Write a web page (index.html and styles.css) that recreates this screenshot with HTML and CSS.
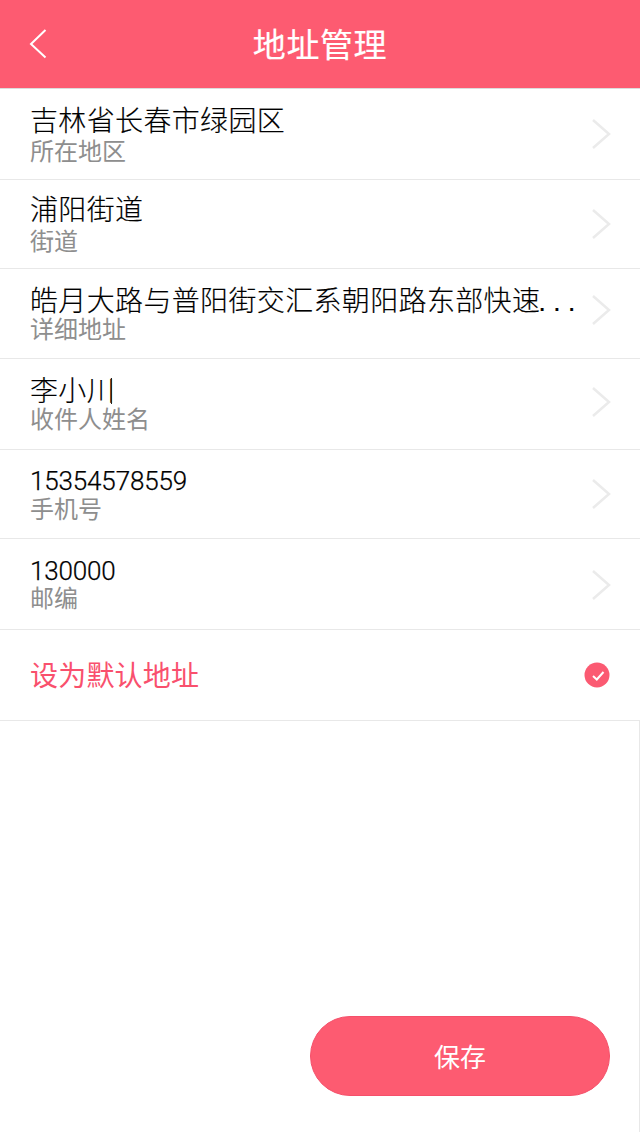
FILE: index.html
```html
<!DOCTYPE html>
<html>
<head>
  <title>地址管理</title>
  <link rel="stylesheet" href="styles.css">
</head>
<body>
  <div class="page">
    <div class="header">
      <svg class="back" width="18" height="30" viewBox="0 0 18 30"><path d="M16.5 1 L2 15 L16.5 28.500" fill="none" stroke="#fff" stroke-width="2"/></svg>
      <div class="title">地址管理</div>
    </div>

    <div class="row row1">
      <div class="info">
        <div class="value">吉林省长春市绿园区</div>
        <div class="label">所在地区</div>
      </div>
      <svg class="arrow" width="20" height="30" viewBox="0 0 20 30"><path d="M1 1 L17 15 L1 29" fill="none" stroke="#ebebeb" stroke-width="2.500"/></svg>
    </div>
    <div class="row row2">
      <div class="info">
        <div class="value">浦阳街道</div>
        <div class="label">街道</div>
      </div>
      <svg class="arrow" width="20" height="30" viewBox="0 0 20 30"><path d="M1 1 L17 15 L1 29" fill="none" stroke="#ebebeb" stroke-width="2.500"/></svg>
    </div>
    <div class="row row3">
      <div class="info">
        <div class="value">皓月大路与普阳街交汇系朝阳路东部快速<span class="dots">...</span></div>
        <div class="label">详细地址</div>
      </div>
      <svg class="arrow" width="20" height="30" viewBox="0 0 20 30"><path d="M1 1 L17 15 L1 29" fill="none" stroke="#ebebeb" stroke-width="2.500"/></svg>
    </div>
    <div class="row row4">
      <div class="info">
        <div class="value">李小川<span class="caret"></span></div>
        <div class="label">收件人姓名</div>
      </div>
      <svg class="arrow" width="20" height="30" viewBox="0 0 20 30"><path d="M1 1 L17 15 L1 29" fill="none" stroke="#ebebeb" stroke-width="2.500"/></svg>
    </div>
    <div class="row row5">
      <div class="info">
        <div class="value num">15354578559</div>
        <div class="label">手机号</div>
      </div>
      <svg class="arrow" width="20" height="30" viewBox="0 0 20 30"><path d="M1 1 L17 15 L1 29" fill="none" stroke="#ebebeb" stroke-width="2.500"/></svg>
    </div>
    <div class="row row6">
      <div class="info">
        <div class="value num">130000</div>
        <div class="label">邮编</div>
      </div>
      <svg class="arrow" width="20" height="30" viewBox="0 0 20 30"><path d="M1 1 L17 15 L1 29" fill="none" stroke="#ebebeb" stroke-width="2.500"/></svg>
    </div>
    <div class="row row-default">
      <div class="default-text">设为默认地址</div>
      <svg class="check" width="26" height="26" viewBox="0 0 26 26"><circle cx="13" cy="13" r="12.500" fill="#fb5a72"/><path d="M9 14 L12.800 17.500 L19.500 10" fill="none" stroke="#fff" stroke-width="2"/></svg>
    </div>

    <div class="bottom">
      <div class="save">保存</div>
    </div>
  </div>
</body>
</html>
```

FILE: styles.css
```css
body {
  margin: 0;
  background-color: #fff;
  font-family: "Liberation Sans", "Noto Sans CJK SC", sans-serif;
}

.page {
  display: flex;
  flex-direction: column;
  width: 640px;
  height: 1132px;
  overflow: hidden;
}

.header {
  position: relative;
  flex: none;
  box-sizing: border-box;
  height: 89px;
  background-color: #fd5b71;
  border-bottom: 1px solid #dcdcdc;
  display: flex;
  justify-content: center;
  align-items: center;
}

.header .back {
  position: absolute;
  left: 29px;
  top: 29px;
}

.header .title {
  margin-bottom: 2px;
  color: #fff;
  font-size: 33px;
  letter-spacing: 0.6px;
  -webkit-text-stroke: 0.2px #fff;
}

.row {
  flex: none;
  box-sizing: border-box;
  display: flex;
  align-items: center;
  justify-content: space-between;
  padding: 0 30px;
  border-bottom: 1px solid #e8e8e8;
}

.row1 { height: 91px; }
.row2 { height: 89px; }
.row3 { height: 90px; }
.row4 { height: 91px; }
.row5 { height: 89px; }
.row6 { height: 91px; }
.row-default { height: 91px; }

/* each row sits a little differently in the source, so offsets are per row */
.info {
  align-self: flex-start;
  min-width: 0;
}

.row1 .info { padding-top: 17px; }
.row2 .info { padding-top: 15px; }
.row3 .info { padding-top: 17px; }
.row4 .info { padding-top: 17px; }
.row5 .info { padding-top: 15px; }
.row6 .info { padding-top: 16px; }

.row2 .label { margin-top: 1px; }
.row3 .label { margin-top: -2px; }
.row4 .label { margin-top: -2px; }
.row5 .label { margin-top: -1px; }
.row6 .label { margin-top: -2px; }

.row3 .arrow { margin-bottom: 8px; }
.row4 .arrow { margin-bottom: 4px; }
.row6 .arrow { margin-top: 2px; }

.value {
  color: #000;
  font-size: 28px;
  font-weight: 300;
  line-height: 32px;
  letter-spacing: 0.35px;
  white-space: nowrap;
  -webkit-text-stroke: 0.15px #000;
}

.value.num {
  font-family: Roboto, sans-serif;
  font-size: 26px;
  font-weight: 300;
  letter-spacing: -0.15px;
  -webkit-text-stroke: 0.25px #000;
}

.dots {
  margin-left: -2px;
  letter-spacing: 7px;
}

.caret {
  display: inline-block;
  width: 1px;
  height: 26px;
  margin-left: -4px;
  background-color: #222;
  vertical-align: -3px;
}

.label {
  color: #8e8e8e;
  font-size: 24px;
  line-height: 28px;
}

.arrow {
  flex: none;
  margin-right: -2px;
}

.default-text {
  margin-bottom: 2px;
  color: #f9506d;
  font-size: 28px;
  letter-spacing: 0.2px;
}

.bottom {
  flex: 1;
  display: flex;
  justify-content: flex-end;
  align-items: flex-end;
  padding: 0 29px 36px 0;
  border-right: 1px solid #e8e8e8;
}

.save {
  box-sizing: border-box;
  width: 300px;
  height: 80px;
  padding-bottom: 2px;
  border-radius: 40px;
  border: 1px solid #f5506a;
  background-color: #fd5b71;
  color: #fff;
  font-size: 26px;
  display: flex;
  justify-content: center;
  align-items: center;
}
```
